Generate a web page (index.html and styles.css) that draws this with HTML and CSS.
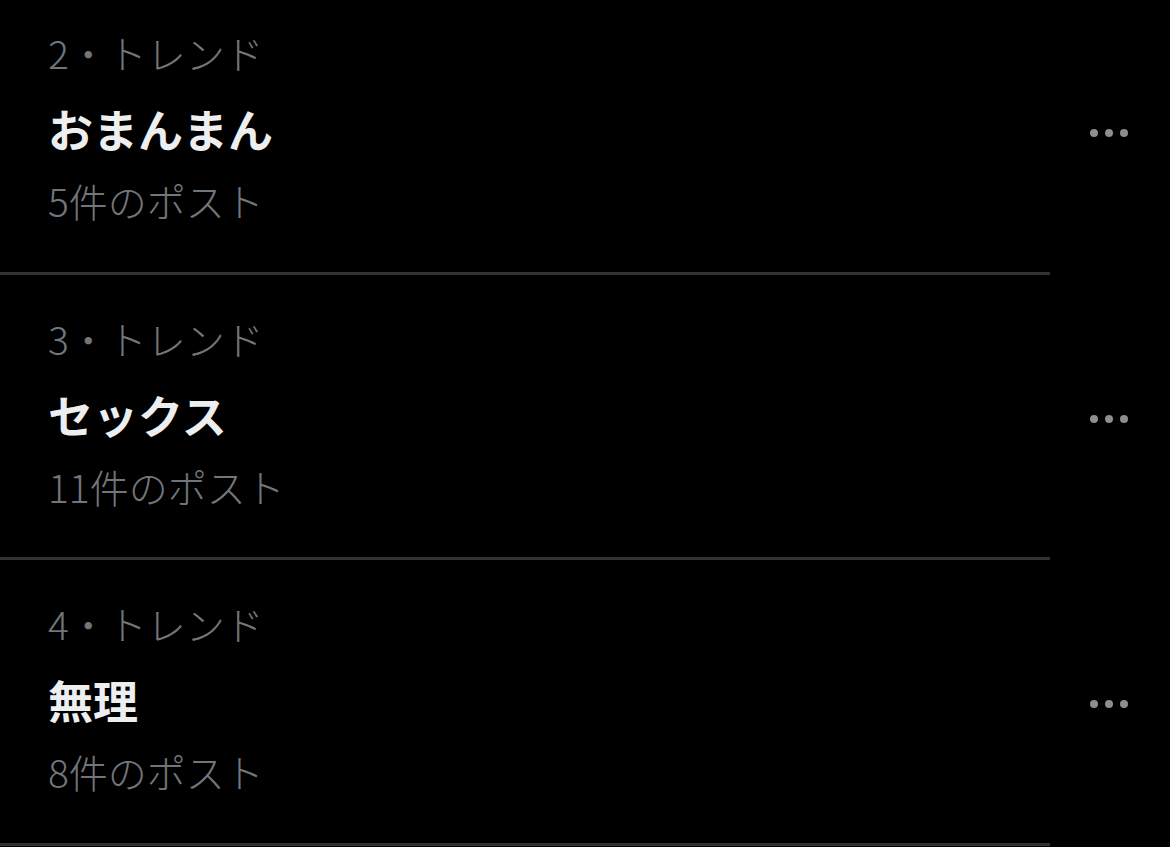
FILE: index.html
```html
<!DOCTYPE html>
<html lang="ja">
<head>
<meta charset="utf-8">
<link rel="stylesheet" href="styles.css">
</head>
<body>
<div class="list">
  <div class="trend">
    <div class="text">
      <div class="label">2・トレンド</div>
      <div class="title">おまんまん</div>
      <div class="count">5件のポスト</div>
    </div>
    <div class="more"><span></span><span></span><span></span></div>
  </div>
  <div class="divider"></div>
  <div class="trend">
    <div class="text">
      <div class="label">3・トレンド</div>
      <div class="title">セックス</div>
      <div class="count">11件のポスト</div>
    </div>
    <div class="more"><span></span><span></span><span></span></div>
  </div>
  <div class="divider"></div>
  <div class="trend">
    <div class="text">
      <div class="label">4・トレンド</div>
      <div class="title">無理</div>
      <div class="count">8件のポスト</div>
    </div>
    <div class="more"><span></span><span></span><span></span></div>
  </div>
  <div class="divider"></div>
</div>
</body>
</html>
```
FILE: styles.css
```css
html, body {
  margin: 0;
  padding: 0;
  background: #000;
  height: 100%;
  overflow: hidden;
}
body {
  font-family: "Liberation Sans", "Noto Sans CJK JP", sans-serif;
}
.list {
  margin-top: -11px;
  display: flex;
  flex-direction: column;
}
.trend {
  display: flex;
  align-items: flex-start;
  justify-content: space-between;
  height: 282.5px;
  padding-left: 48px;
  padding-right: 42px;
  box-sizing: border-box;
}
.text {
  display: flex;
  flex-direction: column;
  padding-top: 39px;
}
.label,
.count {
  font-family: "Noto Sans CJK JP", "Liberation Sans", sans-serif;
  color: #71767b;
  font-size: 39px;
  font-weight: 300;
  line-height: 48px;
}
.title {
  color: #eceeef;
  font-size: 45px;
  font-weight: 700;
  line-height: 56px;
  margin-top: 29px;
}
.count {
  margin-top: 15px;
}
.more {
  align-self: center;
  display: flex;
  gap: 7px;
  margin-top: 6px;
}
.more span {
  width: 8px;
  height: 8px;
  border-radius: 50%;
  background: #8b8e92;
}
.divider {
  width: 1050px;
  height: 3px;
  background: #2f3336;
}
```
